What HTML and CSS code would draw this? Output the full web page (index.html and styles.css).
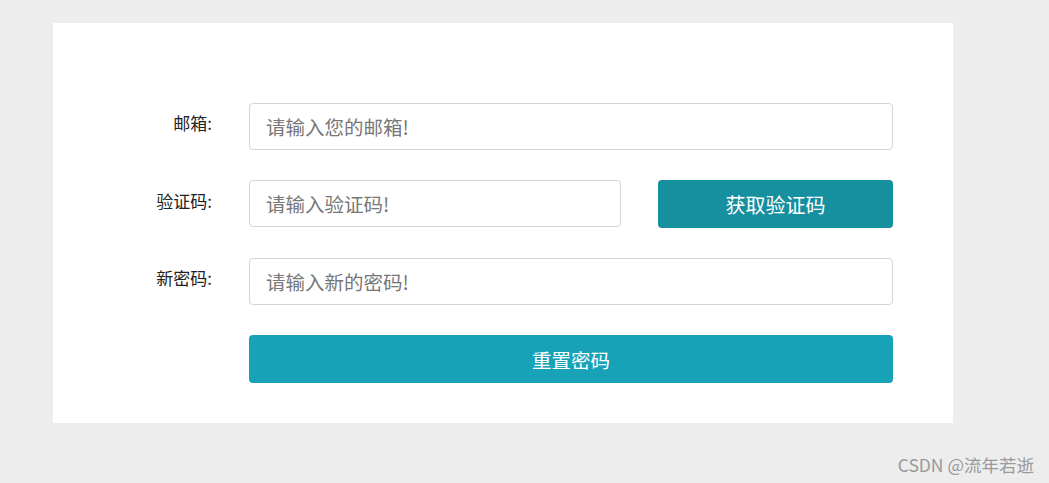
FILE: index.html
```html
<!DOCTYPE html>
<html lang="zh-CN">
<head>
<meta charset="utf-8">
<title>重置密码</title>
<link rel="stylesheet" href="styles.css">
</head>
<body>
<div class="page">
  <div class="card">
    <form class="form">
      <label class="label">邮箱:</label>
      <input class="input" type="text" placeholder="请输入您的邮箱!">

      <label class="label">验证码:</label>
      <div class="code-row">
        <input class="input code-input" type="text" placeholder="请输入验证码!">
        <button type="button" class="btn btn-code">获取验证码</button>
      </div>

      <label class="label">新密码:</label>
      <input class="input" type="password" placeholder="请输入新的密码!">

      <span></span>
      <button type="button" class="btn btn-reset">重置密码</button>
    </form>
  </div>
  <div class="watermark">CSDN @流年若逝</div>
</div>
</body>
</html>
```

FILE: styles.css
```css
html, body {
  margin: 0;
  padding: 0;
  background: #ededed;
  font-family: "Noto Sans CJK SC", "Noto Sans", sans-serif;
}

.page {
  width: 1049px;
  height: 483px;
  position: relative;
  padding-top: 23px;
  box-sizing: border-box;
}

.card {
  margin-left: 53px;
  width: 900px;
  height: 400px;
  background: #ffffff;
  box-sizing: border-box;
  padding: 80px 60px 0 0;
}

.form {
  display: grid;
  grid-template-columns: 159px 644px;
  column-gap: 37px;
  row-gap: 30px;
  align-items: center;
}

.label {
  text-align: right;
  font-size: 17px;
  color: #222;
  padding-bottom: 8px;
}

.input {
  height: 47px;
  box-sizing: border-box;
  border: 1px solid #d3d5db;
  border-radius: 4px;
  padding: 0 16px;
  font-family: inherit;
  font-size: 19.5px;
  color: #333;
  outline: none;
  width: 100%;
}

.input::placeholder {
  color: #777;
}

.code-row {
  display: flex;
  gap: 37px;
  align-items: flex-start;
}

.code-input {
  width: 372px;
  flex: none;
}

.btn {
  border: none;
  border-radius: 4px;
  color: #fff;
  font-family: inherit;
  cursor: pointer;
}

.btn-code {
  flex: 1;
  height: 48px;
  background: #168f9f;
  font-size: 20px;
}

.btn-reset {
  height: 48px;
  width: 100%;
  background: #18a2b8;
  font-size: 19.5px;
}

.watermark {
  position: absolute;
  right: 15px;
  bottom: 6px;
  font-size: 17.5px;
  color: #9a9a9a;
}
```
